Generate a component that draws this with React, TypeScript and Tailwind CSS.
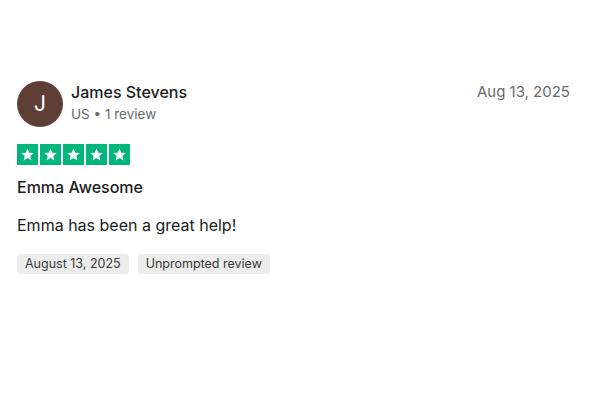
const Star = () => (
  <span className="flex h-[21px] w-[21px] items-center justify-center bg-[#00b67a]">
    <svg viewBox="0 0 24 24" className="h-[15px] w-[15px]" fill="#fff">
      <path d="M12 2.5l2.8 6.6 7.2.6-5.5 4.7 1.7 7-6.2-3.8-6.2 3.8 1.7-7L2 9.7l7.2-.6z" />
    </svg>
  </span>
);

const App = () => {
  return (
    <div className="h-[400px] w-[600px] bg-white px-[17px] pt-[81px] font-['Inter',sans-serif] text-[#1c1c1c]">
      {/* 헤더: 아바타, 이름, 날짜 */}
      <div className="flex items-start justify-between">
        <div className="flex gap-[8px]">
          <div className="flex h-[46px] w-[46px] items-center justify-center rounded-full bg-[#5e3f36] text-[21px] text-white">
            J
          </div>
          <div className="pt-[1px]">
            <h3 className="text-[16px] font-medium leading-[20px]">James Stevens</h3>
            <span className="mt-[3px] block text-[13.5px] leading-[18px] text-[#6a6a6a]">US • 1 review</span>
          </div>
        </div>
        <span className="mr-[13px] pt-[1px] text-[15px] leading-[20px] text-[#6a6a6a]">Aug 13, 2025</span>
      </div>

      <div className="mt-[17px] flex gap-[2px]">
        <Star />
        <Star />
        <Star />
        <Star />
        <Star />
      </div>

      <h4 className="mt-[12px] text-[16px] font-medium leading-[20px]">Emma Awesome</h4>
      <p className="mt-[18px] text-[16px] leading-[20px]">Emma has been a great help!</p>

      <div className="mt-[19px] flex gap-[9px]">
        <span className="rounded-[4px] bg-[#ececec] px-[8px] py-[2px] text-[12.5px] leading-[16px] text-[#3a3a3a]">
          August 13, 2025
        </span>
        <span className="rounded-[4px] bg-[#ececec] px-[8px] py-[2px] text-[12.5px] leading-[16px] text-[#3a3a3a]">
          Unprompted review
        </span>
      </div>
    </div>
  );
};

export default App;
